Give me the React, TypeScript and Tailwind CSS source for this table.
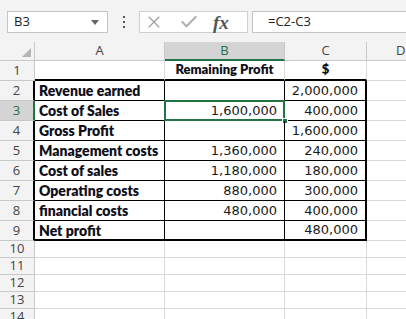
import { X, Check } from 'lucide-react';

const ROWS = [
  { n: 1, a: '', b: 'Remaining Profit', c: '$' },
  { n: 2, a: 'Revenue earned', b: '', c: '2,000,000' },
  { n: 3, a: 'Cost of Sales', b: '1,600,000', c: '400,000' },
  { n: 4, a: 'Gross Profit', b: '', c: '1,600,000' },
  { n: 5, a: 'Management costs', b: '1,360,000', c: '240,000' },
  { n: 6, a: 'Cost of sales', b: '1,180,000', c: '180,000' },
  { n: 7, a: 'Operating costs', b: '880,000', c: '300,000' },
  { n: 8, a: 'financial costs', b: '480,000', c: '400,000' },
  { n: 9, a: 'Net profit', b: '', c: '480,000' },
];

const LABEL = "font-['Lato','Open_Sans',sans-serif] font-extrabold text-[14px] text-[#10101a]";
const TITLE = "font-['Lato','Open_Sans',sans-serif] font-extrabold text-[13px] text-[#10101a]";
const NUM = "font-['DejaVu_Sans',sans-serif] text-[13px] text-[#1a1a1a]";
const HDR = "font-['Open_Sans','Noto_Sans',sans-serif] text-[13px] text-[#444]";

function FormulaBar() {
  return (
    <div className="h-[42px] bg-[#f3f3f3] flex items-start pt-[11px] pl-[7px] overflow-hidden">
      <div className="w-[101px] h-[22px] bg-white border border-[#c6c6c6] flex items-center pl-[6px] pr-[8px] font-['Open_Sans',sans-serif] text-[13px] text-[#222] shrink-0">
        <span className="flex-1">B3</span>
        <svg width="8" height="5" viewBox="0 0 8 5">
          <path d="M0 0h8L4 5z" fill="#666" />
        </svg>
      </div>
      <div className="w-[31px] h-[22px] flex flex-col items-center justify-center gap-[3px] shrink-0">
        <span className="w-[2px] h-[2px] bg-[#555]" />
        <span className="w-[2px] h-[2px] bg-[#555]" />
        <span className="w-[2px] h-[2px] bg-[#555]" />
      </div>
      <div className="w-[109px] h-[22px] bg-white border border-[#d0d0d0] flex items-center shrink-0">
        <X size={20} strokeWidth={1.3} className="text-[#9c9c9c] ml-[4px]" />
        <Check size={20} strokeWidth={2.6} className="text-[#b0b0b0] ml-[15px]" />
        <span className="ml-[14px] font-['Liberation_Serif',serif] italic font-bold text-[19px] text-[#555] leading-none">fx</span>
      </div>
      <div className="flex-1 h-[22px] ml-[4px] bg-white border border-r-0 border-[#c6c6c6] flex items-center pl-[15px] font-['Open_Sans',sans-serif] text-[13px] text-[#222] min-w-[200px]">
        =C2-C3
      </div>
    </div>
  );
}

function HeaderRow() {
  return (
    <div className="flex h-[19px] bg-[#f3f3f3]">
      <div className="w-[35px] shrink-0 border-r border-b border-[#c8c8c8] flex items-end justify-end pr-[3px] pb-[3px]">
        <svg width="9" height="9" viewBox="0 0 9 9">
          <path d="M9 0V9H0z" fill="#b5b5b5" />
        </svg>
      </div>
      <div className={`w-[130px] shrink-0 border-r border-b border-[#c8c8c8] flex items-center justify-center ${HDR}`}>A</div>
      <div className={`w-[120px] shrink-0 border-r border-[#c8c8c8] border-b-2 border-b-[#217346] bg-[#d4d4d4] flex items-center justify-center ${HDR} text-[#217346]`}>B</div>
      <div className={`w-[82px] shrink-0 border-r border-b border-[#c8c8c8] flex items-center justify-center ${HDR}`}>C</div>
      <div className={`flex-1 border-b border-[#c8c8c8] flex items-center pl-[29px] ${HDR}`}>D</div>
    </div>
  );
}

function DataRow({ r }: { r: (typeof ROWS)[number] }) {
  const head = r.n === 1;
  const last = r.n === 9;
  const sel = r.n === 3;
  const hdrCls = head
    ? 'border-r border-[#c8c8c8] bg-[#f3f3f3] text-[#444]'
    : sel
      ? 'border-r-2 border-r-[#217346] bg-[#d4d4d4] text-[#217346]'
      : 'border-r-2 border-r-black bg-[#f3f3f3] text-[#444]';
  const cellBorder = head
    ? 'border-r border-r-[#d9d9d9] border-b-2 border-b-black'
    : last
      ? 'border-r border-r-black border-b-2 border-b-black'
      : 'border-r border-r-black border-b border-b-black';
  const cBorder = head
    ? 'border-r border-r-[#d9d9d9] border-b-2 border-b-black'
    : last
      ? 'border-r-2 border-r-black border-b-2 border-b-black'
      : 'border-r-2 border-r-black border-b border-b-black';

  return (
    <div className="flex h-[20px]">
      <div className={`w-[35px] shrink-0 border-b border-b-[#c8c8c8] flex items-center justify-center font-['Open_Sans','Noto_Sans',sans-serif] text-[13px] ${hdrCls}`}>
        {r.n}
      </div>
      <div className={`w-[130px] shrink-0 flex items-center pl-[4px] whitespace-nowrap overflow-hidden ${cellBorder} ${LABEL}`}>{r.a}</div>
      <div className={`relative w-[120px] shrink-0 flex items-center ${cellBorder} ${head ? `justify-center ${TITLE}` : `justify-end pr-[7px] ${NUM}`}`}>
        {r.b}
        {sel && (
          <>
            <div className="absolute -left-[1px] -top-[1px] -right-[1px] -bottom-[1px] border-2 border-[#217346]" />
            <div className="absolute -right-[4px] -bottom-[4px] w-[6px] h-[6px] bg-[#217346] border border-white" />
          </>
        )}
      </div>
      <div className={`w-[82px] shrink-0 flex items-center ${cBorder} ${head ? `justify-center ${TITLE}` : `justify-end pr-[7px] ${NUM}`}`}>{r.c}</div>
      <div className="flex-1 border-b border-b-[#d9d9d9]" />
    </div>
  );
}

function EmptyRow({ n }: { n: number }) {
  return (
    <div className="flex h-[17px]">
      <div className="w-[35px] shrink-0 border-r border-b border-[#c8c8c8] bg-[#f3f3f3] flex items-center justify-center font-['Open_Sans','Noto_Sans',sans-serif] text-[13px] text-[#444]">
        {n}
      </div>
      <div className="w-[130px] shrink-0 border-r border-b border-[#d9d9d9]" />
      <div className="w-[120px] shrink-0 border-r border-b border-[#d9d9d9]" />
      <div className="w-[82px] shrink-0 border-r border-b border-[#d9d9d9]" />
      <div className="flex-1 border-b border-[#d9d9d9]" />
    </div>
  );
}

export default function App() {
  return (
    <div className="w-[406px] h-[319px] overflow-hidden bg-white">
      <FormulaBar />
      <HeaderRow />
      {ROWS.map((r) => (
        <DataRow key={r.n} r={r} />
      ))}
      {[10, 11, 12, 13, 14].map((n) => (
        <EmptyRow key={n} n={n} />
      ))}
    </div>
  );
}
